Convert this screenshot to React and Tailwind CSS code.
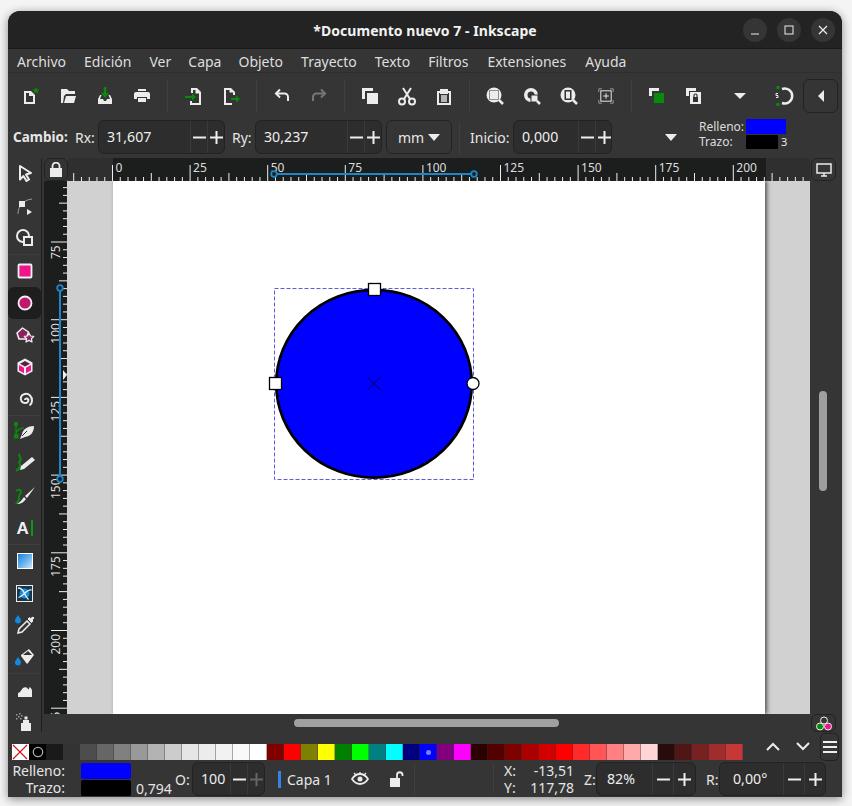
import React from "react";

const W = "#ececec";
const G = "#0a8a0a";
const Ico = ({ s = 20, children, vb = "0 0 20 20" }) => (
  <svg width={s} height={s} viewBox={vb} fill="none">{children}</svg>
);

const toolbarIcons = {
  new: <Ico><path d="M3 5h7l4 4v9h-11z M5 7v9h7v-6h-4v-3z" fill={W} fillRule="evenodd" /><path d="M15 1l1 2.300 2.500.2-1.900 1.600.6 2.400-2.200-1.300-2.200 1.300.6-2.400-1.900-1.600 2.500-.2z" fill={G} /></Ico>,
  open: <Ico><path d="M3 3h6l2 2h6v3h-9l-2 2-1 7h-2z" fill={W} /><path d="M6 17l2-7h10l-2 7z" fill={W} /></Ico>,
  save: <Ico><path d="M10 1v7" stroke={G} strokeWidth="2.500" /><path d="M6 7h8l-4 5z" fill={G} /><path d="M5 9h1.500l-1.500 4h3l1 2h2l1-2h3l-1.500-4h1.500l2 4v5h-14v-5z" fill={W} /></Ico>,
  print: <Ico><path d="M6 3h8v2h-8z M4 6h12q2 0 2 2v5h-3v-2h-10v2h-3v-5q0-2 2-2z M6 12h8v4h-8z" fill={W} /></Ico>,
  import: <Ico><path d="M7 2h6l4 4v13h-11v-4h2v2h7v-9.500h-3.500v-3.500h-2.500v3h-2z" fill={W} /><path d="M1 11h8" stroke={G} strokeWidth="2" /><path d="M8 7.500l4 3.500-4 3.500z" fill={G} /></Ico>,
  export: <Ico><path d="M3 2h7l4 4v3h-2v-2.500h-3.500v-2.500h-3.500v13h6v2h-8z" fill={W} /><path d="M10 13h6" stroke={G} strokeWidth="2" /><path d="M15 9.500l4 3.500-4 3.500z" fill={G} /></Ico>,
  undo: <Ico><path d="M4 7.500h8.500a3.500 3.500 0 0 1 3.500 3.500v4" stroke={W} strokeWidth="2" /><path d="M8 3.500l-4 4 4 4" stroke={W} strokeWidth="2" /></Ico>,
  redo: <Ico><path d="M16 7.500h-8.500a3.500 3.500 0 0 0-3.500 3.500v4" stroke="#777" strokeWidth="2" /><path d="M12 3.500l4 4-4 4" stroke="#777" strokeWidth="2" /></Ico>,
  dup: <Ico><path d="M2 2h11v3h-8v8h-3z" fill={W} /><path d="M7 7h11v11h-11z" fill={W} /></Ico>,
  cut: <Ico s={20}><circle cx="5" cy="15.500" r="3" stroke={W} strokeWidth="2" /><circle cx="15" cy="15.500" r="3" stroke={W} strokeWidth="2" /><path d="M7 13l7-11M13 13l-7-11" stroke={W} strokeWidth="2" /></Ico>,
  paste: <Ico><path d="M6 3h8v2h3v14h-14v-14h3z M5 7v10h10v-10h-1v1h-8v-1z" fill={W} fillRule="evenodd" /><path d="M7 9h6v7h-6z" fill={W} opacity=".7" /></Ico>,
  zsel: <Ico><path d="M9 1.500a7.500 7.500 0 1 0 0 15 7.500 7.500 0 0 0 0-15z" fill={W} /><rect x="4.500" y="4.500" width="9" height="9" stroke="#333" strokeDasharray="1 1" /><path d="M14 14l4 4" stroke={W} strokeWidth="2.500" /></Ico>,
  zdraw: <Ico><path d="M9 2a7 7 0 1 0 0 14 7 7 0 0 0 0-14z M9 5.500a3.500 3.500 0 1 0 0 7 3.500 3.500 0 0 0 0-7z" fill={W} fillRule="evenodd" /><rect x="9" y="9" width="7" height="7" fill={W} stroke="#333" /><path d="M15 15l3 3" stroke={W} strokeWidth="2.500" /></Ico>,
  zpage: <Ico><path d="M9 1.500a7.500 7.500 0 1 0 0 15 7.500 7.500 0 0 0 0-15z" fill={W} /><rect x="6" y="4.500" width="6" height="9" fill="#333" stroke="#333" /><rect x="7" y="5.500" width="4" height="7" fill={W} /><path d="M14 14l4 4" stroke={W} strokeWidth="2.500" /></Ico>,
  zcenter: <Ico s={16}><rect x="3.500" y="3.500" width="13" height="13" stroke={W} strokeWidth="1.200" /><path d="M1 5v-4h4M15 1h4v4M19 15v4h-4M5 19h-4v-4" stroke="#999" strokeWidth="1.200" /><path d="M10 6.500v7M6.500 10h7" stroke={W} strokeWidth="1.200" /></Ico>,
  group: <Ico><path d="M2 2h10v3h-7v5h-3z" fill={W} /><path d="M7 7h10v10h-10z" fill={G} /></Ico>,
  lockg: <Ico><path d="M2 2h10v3h-7v5h-3z" fill={W} /><path d="M6 6h11v12h-11z" fill={W} /><path d="M9 11h5v5h-5z" fill="#333" /><path d="M10 11v-1.500a1.500 1.500 0 0 1 3 0v1.500" stroke="#333" strokeWidth="1.200" /></Ico>,
  caret: <Ico><path d="M4 7h12l-6 6z" fill={W} /></Ico>,
  snap: <Ico s={22} vb="0 0 22 22"><path d="M10 4a7.500 7.500 0 1 1 0 14" stroke={W} strokeWidth="2.500" /><circle cx="6" cy="2.500" r="1.800" fill={G} /><circle cx="6" cy="19.500" r="1.800" fill={G} /><path d="M6 8.500h-2v2h2v2h-2" stroke={W} strokeWidth="1" /></Ico>,
};

const Btn = ({ k }) => (
  <div className="w-[37px] h-full flex items-center justify-center shrink-0">{toolbarIcons[k]}</div>
);
const VSep = ({ h = "h-[34px]", m = "ml-[7px] mr-[6px]" }) => <div className={`w-px ${h} ${m} bg-[#404040] shrink-0`} />;

const Spin = ({ value, w, text, b1 = 17, b2 = 18, dim = false, left = "pl-[8px]" }) => (
  <div style={{ width: w }} className="h-[34px] rounded-[6px] border border-[#222] bg-[#2d2d2d] flex items-center text-[14.200px] text-[#eee] shrink-0">
    <div style={{ width: text }} className={`${left} shrink-0`}>{value}</div>
    <div style={{ width: b1 }} className="h-full border-l border-[#3a3a3a] flex items-center justify-center shrink-0">
      <svg width="13" height="13" viewBox="0 0 13 13"><path d="M0 6.500h13" stroke="#eee" strokeWidth="2" /></svg>
    </div>
    <div style={{ width: b2 }} className="h-full border-l border-[#3a3a3a] flex items-center justify-center shrink-0">
      <svg width="13" height="13" viewBox="0 0 13 13"><path d="M0 6.500h13M6.500 0v13" stroke={dim ? "#666" : "#eee"} strokeWidth="2" /></svg>
    </div>
  </div>
);

const tools = [
  ["sel", <Ico><path d="M5 2l11 7-5 1.500 3 5-2.500 1.500-3-5-3.500 3.500z" stroke={W} strokeWidth="2" fill="#333" strokeLinejoin="round" /></Ico>],
  ["node", <Ico><path d="M3 18c0-8 5-14 14-15" stroke="#999" strokeWidth="1" /><rect x="4" y="5" width="6" height="6" fill={W} /><path d="M12 13l5 3-5 3z" fill={W} /></Ico>],
  ["tweak", <Ico><circle cx="8" cy="8" r="6" stroke={W} strokeWidth="2" /><rect x="9" y="9" width="8" height="8" stroke={W} strokeWidth="2" fill="#333" /></Ico>],
  "sep",
  ["rect", <Ico><rect x="3.500" y="3.500" width="13" height="13" rx="1" fill="#f0148c" stroke="#f2f2f2" strokeWidth="1.800" /></Ico>],
  ["ell", <Ico><circle cx="10" cy="10" r="6.500" fill="#c0186f" stroke="#f2f2f2" strokeWidth="1.800" /></Ico>],
  ["star", <Ico><path d="M7.500 3l6 4-2.500 7h-7l-2-6z" fill="#8c2160" stroke="#f0f0f0" strokeWidth="1.500" strokeLinejoin="round" /><path d="M14 8l1.500 3 3.300.4-2.400 2.300.6 3.300-3-1.600-3 1.600.6-3.300-2.400-2.300 3.300-.4z" fill="#8c2160" stroke="#f0f0f0" strokeWidth="1.200" strokeLinejoin="round" /></Ico>],
  ["box", <Ico><path d="M10 1.500l7.500 4v9l-7.500 4-7.500-4v-9z" fill="#f0f0f0" /><path d="M10 4l5 2.700-5 2.700-5-2.700z" fill="#5a2240" /><path d="M4 8l5 2.700v5.500l-5-2.700z" fill="#f0148c" /><path d="M16 8l-5 2.700v5.500l5-2.700z" fill="#f0148c" /></Ico>],
  ["spiral", <Ico><path d="M10 11a1.500 1.500 0 0 1 2-1.500c2 .5 2 4-1 4.500-4 .5-6-3-5-6 1-3 6-4.500 9-1.500 3 3 2.500 8-.5 10" stroke={W} strokeWidth="2" /></Ico>],
  "sep",
  ["pen", <Ico s={24} vb="0 0 24 24"><circle cx="3" cy="4" r="2.200" fill={G} /><rect x="1" y="14" width="4.500" height="4.500" fill={G} /><path d="M3 5v9M3 14c1-4 4-6 8-6" stroke={G} strokeWidth="1.300" /><path d="M21 6c-6 0-11 3-12 8l-2 5 5-2c6-1 9-5 9-11z" fill={W} /><path d="M9 16l5-5" stroke="#333" /></Ico>],
  ["pencil", <Ico s={24} vb="0 0 24 24"><path d="M7 2c-3 2 3 4 0 7-3 2 3 4-1 7l-3 3" stroke={G} strokeWidth="2" /><path d="M19 5l3 3-11 9-4 1 1-4z" fill={W} /><path d="M5 19l2-1-1-2z" fill={G} /></Ico>],
  ["brush", <Ico s={24} vb="0 0 24 24"><path d="M3 7c4-3 6 0 4 3s0 4-2 7l-2 3" stroke={G} strokeWidth="2" /><path d="M22 3l-10 9 2 2z" fill={W} /><path d="M11 13l2 2c-2 3-5 5-9 5 3-2 5-4 7-7z" fill={W} /></Ico>],
  ["text", <div className="relative ml-[1px] w-[23px] h-[20px] flex items-center pl-[3px]"><span className="text-[17px] font-bold leading-none text-[#f0f0f0] font-['Liberation_Sans',sans-serif]">A</span><div className="absolute left-[17px] top-[2px] w-[2px] h-[16px] bg-[#0a9a0a]" /></div>],
  "sep",
  ["grad", <div className="w-[16px] h-[16px] border border-white bg-linear-to-br from-[#1080d8] via-[#60b0ec] to-[#c8e4f8]" />],
  ["mesh", <Ico s={17} vb="0 0 17 17"><rect x=".500" y=".500" width="16" height="16" fill="#16364e" stroke="#eee" /><circle cx="8.500" cy="8.500" r="5" fill="#1c8bd8" /><path d="M8.500 8.500C7 5 5 3 2 3M8.500 8.500c2-2 4-4 7-3.500M8.500 8.500c-2 1.500-3 3-6 4M8.500 8.500c1 2 2 4 4 6" stroke="#e8f4ff" strokeWidth="1.300" /></Ico>],
  ["dropper", <Ico s={22} vb="0 0 22 22"><path d="M4 1c-2 3-3 4-3 5.500a3 3 0 0 0 6 0c0-1.500-1-2.500-3-5.500z" fill="#1089e0" /><path d="M19 3l1 1-2 2 1 1-1.500 1.500-3.500-3.500 1.500-1.500 1 1z" fill={W} stroke={W} /><path d="M13 7l3 3-8 8-4 1 1-4z" stroke={W} strokeWidth="1.500" /></Ico>],
  ["bucket", <Ico s={22} vb="0 0 22 22"><path d="M4 11c-2 3-3 4-3 5.500a3 3 0 0 0 6 0c0-1.500-1-2.500-3-5.500z" fill="#1089e0" /><path d="M7 9l8-6 5 6-6 8-1 1-6-8z" fill={W} /><path d="M9 9l5-4 4 4z" fill="#333" /></Ico>],
  "sep",
  ["eraser", <Ico><path d="M3 17v-4c2 0 3-3 5-5 2-1.500 4-1 5 1 .5 1 1 0 1.500-2 2 1 3 3 2.500 6v4z" fill={W} /></Ico>],
  ["spray", <Ico><path d="M6 11h10v8h-10z M8 8h6v3h-6z M9.500 4.500h3v3h-3z" fill={W} /><g fill="#999"><rect x="1" y="2" width="1.500" height="1.500" /><rect x="4" y="1" width="1.500" height="1.500" /><rect x="3" y="4" width="1.500" height="1.500" /><rect x="6" y="3" width="1.500" height="1.500" /><rect x="1" y="6" width="1.500" height="1.500" /><rect x="5" y="6" width="1.500" height="1.500" /></g></Ico>],
];

const topTicks = () => {
  const out = [];
  const px = 77.6 / 10;
  for (let i = -5; i <= 90; i++) {
    const x = 112.5 - 68 + i * px;
    if (x > 742) break;
    const h = i % 10 === 0 ? 16 : i % 5 === 0 ? 8 : 4;
    out.push(<line key={i} x1={x} x2={x} y1={23 - h} y2={23} stroke="#eee" strokeWidth="1" />);
    if (i % 10 === 0 && i >= 0 && i <= 80) {
      out.push(
        <text key={"t" + i} x={x + 3} y={14} fontSize="12" fill="#ddd" fontFamily="Noto Sans, sans-serif">{(i / 10) * 25}</text>
      );
    }
  }
  return out;
};

const leftTicks = () => {
  const out = [];
  const px = 77.7 / 10;
  const start = 242 - 181;
  for (let i = -8; i <= 62; i++) {
    const y = start + i * px;
    if (y > 533 || y < 0) continue;
    const h = i % 10 === 0 ? 16 : i % 5 === 0 ? 8 : 4;
    out.push(<line key={i} y1={y} y2={y} x1={23 - h} x2={23} stroke="#eee" strokeWidth="1" />);
    if (i % 10 === 0) {
      const v = 75 + (i / 10) * 25;
      out.push(
        <text key={"t" + i} transform={`translate(16 ${y + 3 + String(v).length * 7}) rotate(-90)`} fontSize="12" fill="#ddd" fontFamily="Noto Sans, sans-serif">{v}</text>
      );
    }
  }
  return out;
};

const palette = ["#4d4d4d", "#666", "#808080", "#999", "#b3b3b3", "#ccc", "#e6e6e6", "#ececec", "#f2f2f2", "#f9f9f9", "#fff", "#800000", "#f00", "#808000", "#ff0", "#008000", "#0f0", "#008080", "#0ff", "#000080", "#00f", "#800080", "#f0f", "#2b0000", "#550000", "#800000", "#a00", "#d40000", "#f00", "#ff2a2a", "#f55", "#ff8080", "#faa", "#ffd5d5", "#280b0b", "#501616", "#782121", "#a02c2c", "#c83737"];

const menu = [
  ["Archivo", "mr-[18px]"],
  ["Edición", "mr-[18px]"],
  ["Ver", "mr-[17px]"],
  ["Capa", "mr-[17px]"],
  ["Objeto", "mr-[18px]"],
  ["Trayecto", "mr-[18px]"],
  ["Texto", "mr-[18px]"],
  ["Filtros", "mr-[19px]"],
  ["Extensiones", "mr-[19px]"],
  ["Ayuda", ""],
];

export default function App() {
  return (
    <div className="w-[852px] h-[806px] bg-[#f4f4f4] pl-[8px] pt-[11px] overflow-hidden font-['Noto_Sans',sans-serif]">
      <div className="w-[834px] h-[786px] flex flex-col bg-[#353535] rounded-t-[12px] shadow-[0_2px_10px_rgba(0,0,0,0.45)] overflow-hidden text-[#e6e6e6]">
        {/* title */}
        <div className="h-[38px] shrink-0 bg-[#232323] border-b border-[#1a1a1a] relative flex items-center justify-center pt-[1px]">
          <span className="text-[14px] font-bold text-[#f2f2f2] tracking-[0.05px]">*Documento nuevo 7 - Inkscape</span>
          <div className="absolute right-[7px] top-[7px] flex gap-[10px]">
            <div className="w-[24px] h-[24px] rounded-full bg-[#353535] flex items-center justify-center">
              <svg width="10" height="10" viewBox="0 0 10 10"><path d="M1 9h8" stroke="#eee" /></svg>
            </div>
            <div className="w-[24px] h-[24px] rounded-full bg-[#353535] flex items-center justify-center">
              <svg width="10" height="10" viewBox="0 0 10 10"><rect x="1" y="1" width="8" height="8" stroke="#eee" fill="none" /></svg>
            </div>
            <div className="w-[24px] h-[24px] rounded-full bg-[#353535] flex items-center justify-center">
              <svg width="10" height="10" viewBox="0 0 10 10"><path d="M1 1l8 8M9 1l-8 8" stroke="#eee" strokeWidth="1.200" /></svg>
            </div>
          </div>
        </div>
        {/* menu */}
        <div className="h-[24px] shrink-0 flex items-center pl-[9px] pt-[1px] text-[14px] text-[#dedede] border-b border-[#2e2e2e]">
          {menu.map(([m, c]) => (
            <span key={m} className={c}>{m}</span>
          ))}
        </div>
        {/* toolbar */}
        <div className="h-[45px] shrink-0 flex items-center pl-[4px]">
          <Btn k="new" /><Btn k="open" /><Btn k="save" /><Btn k="print" />
          <VSep m="mx-[7px]" />
          <Btn k="import" /><Btn k="export" />
          <VSep />
          <Btn k="undo" /><Btn k="redo" />
          <VSep />
          <Btn k="dup" /><Btn k="cut" /><Btn k="paste" />
          <VSep />
          <Btn k="zsel" /><Btn k="zdraw" /><Btn k="zpage" /><Btn k="zcenter" />
          <VSep />
          <Btn k="group" /><Btn k="lockg" />
          <div className="w-[9px] shrink-0" />
          <Btn k="caret" />
          <div className="w-[6px] shrink-0" />
          <Btn k="snap" />
          <div className="w-[35px] h-[34px] ml-[2px] rounded-[6px] border border-[#222] flex items-center justify-center shrink-0">
            <svg width="8" height="12" viewBox="0 0 8 12"><path d="M7 0v12L1 6z" fill={W} /></svg>
          </div>
        </div>
        {/* tool controls */}
        <div className="h-[40px] shrink-0 flex items-center pl-[5px] text-[14px] relative">
          <span className="font-bold w-[62px] shrink-0 text-[13.500px] mt-[-2px]">Cambio:</span>
          <span className="w-[23px] shrink-0 mt-[-2px]">Rx:</span>
          <div className="mt-[-2px]"><Spin value="31,607" w={127} text={91} /></div>
          <span className="w-[30px] pl-[7px] shrink-0 mt-[-2px]">Ry:</span>
          <div className="mt-[-2px]"><Spin value="30,237" w={127} text={91} /></div>
          <div className="ml-[4px] mt-[-2px] w-[66px] h-[34px] rounded-[6px] border border-[#222] flex items-center justify-center gap-[4px] text-[14px] shrink-0">
            mm <svg width="12" height="7" viewBox="0 0 12 7"><path d="M0 0h12L6 7z" fill={W} /></svg>
          </div>
          <VSep m="mx-[7px]" h="h-[32px]" />
          <span className="ml-[3px] w-[43px] shrink-0 mt-[-2px]">Inicio:</span>
          <div className="mt-[-2px]"><Spin value="0,000" w={99} text={64} /></div>
          <svg className="ml-[53px] shrink-0" width="14" height="8" viewBox="0 0 14 8"><path d="M0 0h12L6 7z" fill={W} /></svg>
          <div className="absolute left-[691px] top-[1px] w-[90px] text-[12px] leading-[14px]">
            <div className="flex items-center h-[15px]"><span className="w-[47px] text-[#ddd] mt-[1px]">Relleno:</span><div className="w-[40px] h-[15px] bg-[#0000ff] rounded-[1px]" /></div>
            <div className="flex items-center h-[15px]"><span className="w-[47px] text-[#ddd] mt-[1px]">Trazo:</span><div className="w-[32px] h-[14px] bg-black rounded-[1px]" /><span className="ml-[3px] text-[11px]">3</span></div>
          </div>
        </div>
        {/* main */}
        <div className="h-[574px] shrink-0 flex">
          <div className="w-[34px] shrink-0 border-r border-[#1f1f1f] flex flex-col h-full overflow-hidden">
            {tools.map((t, i) =>
              t === "sep" ? (
                <div key={i} className="h-px shrink-0 bg-[#3e3e3e]" />
              ) : (
                <div key={i} className={`h-[32px] w-[33px] flex items-center justify-center rounded-[6px] shrink-0 ${t[0] === "ell" ? "bg-[#1e1e1e]" : ""}`}>
                  {t[1]}
                </div>
              )
            )}
          </div>
          <div className="w-[800px] flex flex-col pl-[2px]">
            {/* top ruler row */}
            <div className="h-[23px] shrink-0 flex">
              <div className="w-[24px] shrink-0 rounded-[6px] border border-[#222] bg-[#333] flex items-center justify-center">
                <svg width="12" height="15" viewBox="0 0 12 15"><path d="M0 6h12v9h-12z" fill={W} /><path d="M2.500 6v-2a3.500 3.500 0 0 1 7 0v2" stroke={W} strokeWidth="1.800" fill="none" /></svg>
              </div>
              <svg width="742" height="23" className="shrink-0 block" viewBox="0 0 742 23">
                <rect x="0" y="0" width="742" height="23" fill="#2f2f2f" />
                <rect x="45" y="0" width="653" height="23" fill="#1c1e1e" />
                {topTicks()}
                <line x1="206" x2="406" y1="16" y2="16" stroke="#1b87c9" strokeWidth="2" />
                <circle cx="206" cy="16" r="2.800" stroke="#1b87c9" strokeWidth="1.800" fill="#1c1e1e" />
                <circle cx="406" cy="16" r="2.800" stroke="#1b87c9" strokeWidth="1.800" fill="#1c1e1e" />
              </svg>
              <div className="w-[25px] ml-[1px] shrink-0 rounded-[6px] border border-[#222] flex items-center justify-center">
                <svg width="16" height="14" viewBox="0 0 16 14"><rect x="1" y="1" width="14" height="9" stroke={W} strokeWidth="1.500" fill="none" /><path d="M5 13h6M8 10v3" stroke={W} strokeWidth="1.500" /></svg>
              </div>
            </div>
            {/* canvas row */}
            <div className="h-[533px] shrink-0 flex">
              <svg width="23" height="533" viewBox="0 0 23 533" className="shrink-0 block">
                <rect width="23" height="533" fill="#1c1e1e" />
                {leftTicks()}
                <line x1="16" x2="16" y1="107" y2="298" stroke="#1b87c9" strokeWidth="2" />
                <circle cx="16" cy="107" r="2.800" stroke="#1b87c9" strokeWidth="1.800" fill="#1c1e1e" />
                <circle cx="16" cy="298" r="2.800" stroke="#1b87c9" strokeWidth="1.800" fill="#1c1e1e" />
                <path d="M19 189l4 5-4 5z" fill="#eee" />
              </svg>
              <div className="w-[743px] bg-[#d1d1d1] relative shrink-0 overflow-hidden">
                <div className="absolute left-[46px] top-0 bottom-0 w-[652px] bg-white shadow-[2px_0_4px_rgba(0,0,0,0.6)]" />
                <svg className="absolute left-[195px] top-[95px]" width="225" height="215" viewBox="0 0 225 215" fill="none">
                  <ellipse cx="112" cy="107.800" rx="97.800" ry="93.900" fill="#0000ff" stroke="#000" strokeWidth="2.700" />
                  <rect x="12.500" y="12.500" width="199" height="191" stroke="#5c5ce0" strokeDasharray="4 2" />
                  <path d="M105.500 101l13 13" stroke="#000" strokeWidth="0.700" />
                  <path d="M118.500 101l-13 13" stroke="#000" strokeWidth="0.700" />
                  <rect x="106.500" y="7.500" width="12" height="12" fill="#fff" stroke="#000" strokeWidth="1.300" />
                  <rect x="7.500" y="101.500" width="12" height="12" fill="#fff" stroke="#000" strokeWidth="1.300" />
                  <circle cx="211" cy="107.500" r="6" fill="#fff" stroke="#000" strokeWidth="1.300" />
                </svg>
              </div>
              <div className="flex-1 flex justify-center pr-[6px] pt-[210px]">
                <div className="w-[8px] h-[100px] rounded-full bg-[#9f9f9f]" />
              </div>
            </div>
            {/* bottom scroll row */}
            <div className="h-[18px] shrink-0 flex items-center relative">
              <div className="ml-[250px] w-[265px] h-[8px] rounded-full bg-[#a0a0a0]" />
              <div className="ml-auto mr-[6px] w-[25px] h-[18px] rounded-[6px] border border-[#222] flex items-center justify-center">
                <svg width="18" height="15" viewBox="0 0 18 15" fill="none"><circle cx="9" cy="4.500" r="3.500" stroke="#eee" /><circle cx="5" cy="10.500" r="3.500" fill="#0a8a0a" stroke="#eee" /><circle cx="13" cy="10.500" r="3.500" fill="#f0148c" stroke="#eee" /></svg>
              </div>
            </div>
          </div>
        </div>
        {/* palette */}
        <div className="h-[29px] shrink-0 flex items-start pt-[12px] pl-[4px] relative">
          <div className="flex">
            <div className="w-[17px] h-[16px] bg-white">
              <svg width="16" height="16" viewBox="0 0 16 16"><path d="M1 1l14 14M15 1l-14 14" stroke="#d01818" strokeWidth="1.200" /></svg>
            </div>
            <div className="w-[17px] h-[16px] bg-black flex items-center justify-center">
              <svg width="12" height="12" viewBox="0 0 12 12"><circle cx="6" cy="6" r="4.700" stroke="#aaa" strokeWidth="1.300" fill="none" /></svg>
            </div>
            <div className="w-[17px] h-[16px] bg-[#1a1a1a]" />
            <div className="w-[17px] h-[16px] bg-[#333]" />
            {palette.map((c, i) => (
              <div key={i} style={{ backgroundColor: c }} className="w-[17px] h-[16px] flex items-center justify-center border-r border-[#3a3a3a]/40">
                {i === 20 && <div className="w-[5px] h-[5px] rounded-full bg-[#7f7fff]" />}
              </div>
            ))}
          </div>
          <svg className="absolute left-[757px] top-[9px]" width="16" height="10" viewBox="0 0 16 10"><path d="M2 9l6-6 6 6" stroke={W} strokeWidth="2" fill="none" /></svg>
          <svg className="absolute left-[787px] top-[9px]" width="16" height="10" viewBox="0 0 16 10"><path d="M2 2l6 6 6-6" stroke={W} strokeWidth="2" fill="none" /></svg>
          <div className="absolute left-[812px] top-px w-[19px] h-[28px] rounded-[5px] border border-[#222] flex flex-col gap-[3px] items-center justify-center">
            <div className="w-[14px] h-[2px] bg-[#eee]" /><div className="w-[14px] h-[2px] bg-[#eee]" /><div className="w-[14px] h-[2px] bg-[#eee]" />
          </div>
        </div>
        {/* status */}
        <div className="h-[36px] shrink-0 flex items-center text-[14px] relative">
          <div className="w-[57px] text-right leading-[17px] shrink-0">
            <div>Relleno:</div>
            <div>Trazo:</div>
          </div>
          <div className="ml-[16px] flex flex-col gap-px shrink-0">
            <div className="w-[50px] h-[16px] bg-[#0000ff] rounded-[2px]" />
            <div className="w-[50px] h-[16px] bg-black rounded-[2px]" />
          </div>
          <span className="ml-[5px] mt-[18px] w-[37px] shrink-0">0,794</span>
          <span className="w-[17px] shrink-0 ml-[2px]">O:</span>
          <Spin value="100" w={73} text={37} dim b1={17} b2={17} />
          <div className="ml-[13px] w-[3px] h-[17px] bg-[#3584e4] shrink-0" />
          <span className="ml-[6px] w-[55px] shrink-0">Capa 1</span>
          <svg className="ml-[9px] shrink-0" width="18" height="14" viewBox="0 0 18 14" fill="none"><path d="M1 7c2-3 5-5 8-5s6 2 8 5c-2 3-5 5-8 5s-6-2-8-5z" stroke={W} strokeWidth="1.800" /><circle cx="9" cy="7" r="2.500" fill={W} /><path d="M3 1l2 2M9 0v2M15 1l-2 2" stroke={W} strokeWidth="1.300" /></svg>
          <svg className="ml-[21px] shrink-0" width="14" height="16" viewBox="0 0 14 16"><path d="M0 7h10v9h-10z" fill={W} /><path d="M7 7v-3a2.700 2.700 0 0 1 5.500 0v1" stroke={W} strokeWidth="1.800" fill="none" /></svg>
          <div className="ml-[10px] w-px h-[30px] bg-[#404040] shrink-0" />
          <div className="absolute left-[485px] top-[3px] w-px h-[30px] bg-[#404040]" />
          <div className="absolute left-[496px] top-0 h-full w-[70px] text-[14px] leading-[17px] flex flex-col justify-center">
            <div className="flex justify-between"><span>X:</span><span>-13,51</span></div>
            <div className="flex justify-between"><span>Y:</span><span>117,78</span></div>
          </div>
          <span className="absolute left-[576px] top-[8px]">Z:</span>
          <div className="absolute left-[588px] top-px"><Spin value="82%" w={100} text={55} b1={21} b2={22} left="pl-[10px]" /></div>
          <span className="absolute left-[698px] top-[8px]">R:</span>
          <div className="absolute left-[711px] top-px"><Spin value="0,00°" w={107} text={63} b1={21} b2={21} left="pl-[13px]" /></div>
        </div>
      </div>
    </div>
  );
}
